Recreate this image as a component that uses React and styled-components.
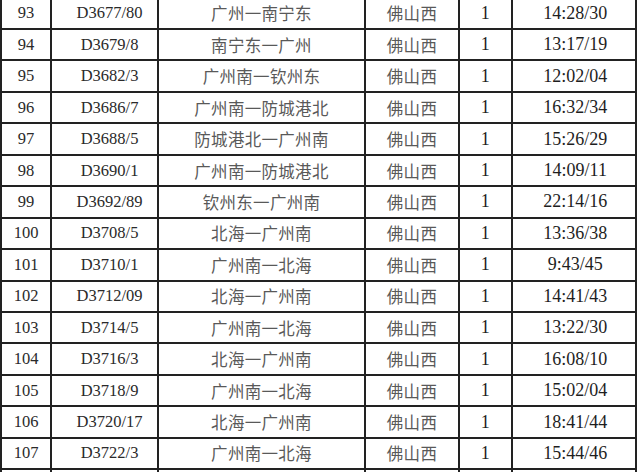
import React from 'react';
import styled, { createGlobalStyle } from 'styled-components';

const GlobalStyle = createGlobalStyle`
	html, body {
		margin: 0;
		padding: 0;
		background: #ffffff;
	}
`;

const trains = [
	['93', 'D3677/80', '广州一南宁东', '佛山西', '1', '14:28/30'],
	['94', 'D3679/8', '南宁东一广州', '佛山西', '1', '13:17/19'],
	['95', 'D3682/3', '广州南一钦州东', '佛山西', '1', '12:02/04'],
	['96', 'D3686/7', '广州南一防城港北', '佛山西', '1', '16:32/34'],
	['97', 'D3688/5', '防城港北一广州南', '佛山西', '1', '15:26/29'],
	['98', 'D3690/1', '广州南一防城港北', '佛山西', '1', '14:09/11'],
	['99', 'D3692/89', '钦州东一广州南', '佛山西', '1', '22:14/16'],
	['100', 'D3708/5', '北海一广州南', '佛山西', '1', '13:36/38'],
	['101', 'D3710/1', '广州南一北海', '佛山西', '1', '9:43/45'],
	['102', 'D3712/09', '北海一广州南', '佛山西', '1', '14:41/43'],
	['103', 'D3714/5', '广州南一北海', '佛山西', '1', '13:22/30'],
	['104', 'D3716/3', '北海一广州南', '佛山西', '1', '16:08/10'],
	['105', 'D3718/9', '广州南一北海', '佛山西', '1', '15:02/04'],
	['106', 'D3720/17', '北海一广州南', '佛山西', '1', '18:41/44'],
	['107', 'D3722/3', '广州南一北海', '佛山西', '1', '15:44/46']
];

// the screenshot is a crop of a longer table
const Frame = styled.div`
	width: 640px;
	height: 472px;
	overflow: hidden;
`;

const Sheet = styled.div`
	width: fit-content;
	margin-top: -3.4px;
	border-left: 2px solid #222;
	border-top: 2px solid #222;
`;

const Row = styled.div`
	display: grid;
	grid-template-columns: 50px 107px 207px 94px 52.5px 124.5px;
	height: ${props => props.$height || 31.45}px;
`;

const Cell = styled.div`
	box-sizing: border-box;
	display: flex;
	align-items: center;
	justify-content: center;
	padding-left: ${props => props.$shift || 0}px;
	border-right: 2px solid #222;
	border-bottom: 2px solid #222;
	white-space: nowrap;
`;

// SimSun-like latin for the index and train number
const Code = styled.span`
	font-family: 'Liberation Serif', serif;
	font-size: 16.5px;
	color: #2a2a2a;
`;

const Han = styled.span`
	font-family: 'Noto Sans CJK SC', sans-serif;
	font-size: 16.5px;
	color: #595959;
	letter-spacing: 0.3px;
`;

const Figure = styled.span`
	font-family: 'Liberation Serif', serif;
	font-size: 18px;
	color: #1e1e1e;
`;

const App = () => (
	<Frame>
		<GlobalStyle />
		<Sheet>
			{trains.map(([no, code, route, station, count, time]) => (
				<Row key={no}>
					<Cell>
						<Code>{no}</Code>
					</Cell>
					<Cell $shift={10}>
						<Code>{code}</Code>
					</Cell>
					<Cell>
						<Han>{route}</Han>
					</Cell>
					<Cell>
						<Han>{station}</Han>
					</Cell>
					<Cell>
						<Figure>{count}</Figure>
					</Cell>
					<Cell $shift={3}>
						<Figure>{time}</Figure>
					</Cell>
				</Row>
			))}
			{/* only the top of the next row shows at the bottom edge */}
			<Row $height={8}>
				<Cell />
				<Cell />
				<Cell />
				<Cell />
				<Cell />
				<Cell />
			</Row>
		</Sheet>
	</Frame>
);

export default App;
